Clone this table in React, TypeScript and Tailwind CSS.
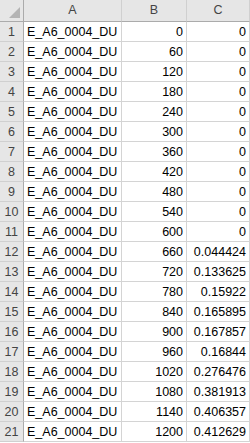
import React from "react";

const bValues = [0, 60, 120, 180, 240, 300, 360, 420, 480, 540, 600, 660, 720, 780, 840, 900, 960, 1020, 1080, 1140, 1200];
const cValues = ["0", "0", "0", "0", "0", "0", "0", "0", "0", "0", "0", "0.044424", "0.133625", "0.15922", "0.165895", "0.167857", "0.16844", "0.276476", "0.381913", "0.406357", "0.412629"];

export default function App() {
    return (
        <div className="w-[250px] h-[443px] bg-white overflow-hidden text-[12.5px] text-black" style={{ fontFamily: '"Liberation Sans", Arial, sans-serif' }}>
            <div className="grid grid-cols-[24px_98px_65px_63px]">
                <div className="h-[22px] bg-[#e6e6e6] border-r border-b border-[#ababab] flex items-end justify-end pr-[3px] pb-[3px]">
                    <svg width="11" height="11" viewBox="0 0 11 11">
                        <polygon points="11,0 11,11 0,11" fill="#b4b4b4" />
                    </svg>
                </div>
                {["A", "B", "C"].map((h) => (
                    <div key={h} className="h-[22px] bg-[#e6e6e6] border-r border-b border-r-[#d0d0d0] border-b-[#ababab] flex items-center justify-center text-[#444]">
                        {h}
                    </div>
                ))}
                {bValues.map((b, i) => (
                    <React.Fragment key={i}>
                        <div className="h-[20px] bg-[#e6e6e6] border-r border-b border-r-[#ababab] border-b-[#d0d0d0] flex items-center justify-center text-[#444] pt-px">
                            {i + 1}
                        </div>
                        <div className="h-[20px] border-r border-b border-[#d4d4d4] flex items-center pl-[3px] pt-px">E_A6_0004_DU</div>
                        <div className="h-[20px] border-r border-b border-[#d4d4d4] flex items-center justify-end pr-[3px] pt-px">{b}</div>
                        <div className="h-[20px] border-r border-b border-[#d4d4d4] flex items-center justify-end pr-[3px] pt-px">{cValues[i]}</div>
                    </React.Fragment>
                ))}
            </div>
        </div>
    );
}
